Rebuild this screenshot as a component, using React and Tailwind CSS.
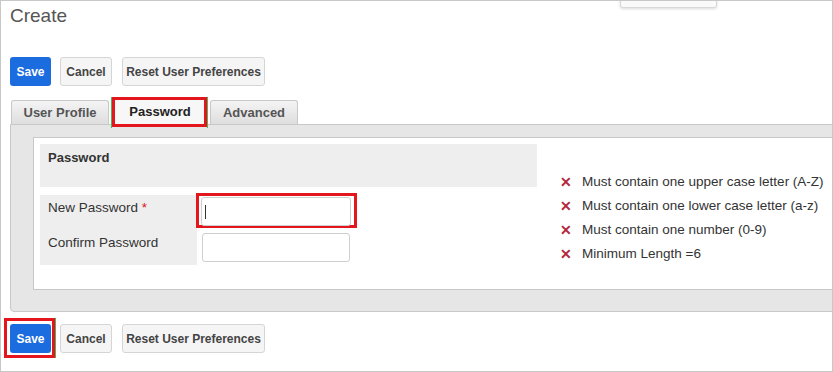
import { useState } from 'react'

const RULES = [
  'Must contain one upper case letter (A-Z)',
  'Must contain one lower case letter (a-z)',
  'Must contain one number (0-9)',
  'Minimum Length =6',
]

function ButtonRow({ highlightSave }) {
  return (
    <div className="flex items-center ml-[9px] gap-[9px]">
      <div className="relative">
        {highlightSave && <span className="absolute -left-[6px] -top-[6px] -right-[4px] -bottom-[5px] border-[3px] border-[#e3161d]" />}
        {highlightSave && <span className="absolute -right-[5px] -top-[6px] -bottom-[5px] w-[1px] bg-[#46b85a]" />}
        <button className="relative w-[41px] h-[29px] rounded-[3px] bg-[#1b6ddf] text-white text-[12px] font-bold">Save</button>
      </div>
      <button className="w-[52px] h-[29px] rounded-[3px] border border-[#d5d5d5] bg-[#f5f5f5] text-[#444] text-[12px] font-bold">Cancel</button>
      <button className="ml-[1px] w-[143px] h-[29px] rounded-[3px] border border-[#d5d5d5] bg-[#f5f5f5] text-[#444] text-[12px] font-bold">Reset User Preferences</button>
    </div>
  )
}

export default function App() {
  const [pwd, setPwd] = useState('')
  const [confirm, setConfirm] = useState('')

  return (
    <div className="relative w-[833px] h-[372px] overflow-hidden bg-white border border-[#c8c8c8] font-['Liberation_Sans',Arial,sans-serif]">
      {/* cut-off menu above */}
      <div className="absolute left-[619px] -top-[6px] w-[97px] h-[13px] rounded-[3px] border border-[#d8d8d8] bg-[#fafafa] shadow-[0_1px_3px_rgba(0,0,0,0.15)]" />

      <h1 className="ml-[9px] mt-[4px] text-[19px] leading-[21px] text-[#555]">Create</h1>

      <div className="mt-[31px]">
        <ButtonRow />
      </div>

      {/* Tabs */}
      <div className="flex items-end ml-[10px] mt-[14px] h-[24px]">
        <div className="w-[98px] h-[24px] rounded-t-[3px] border border-b-0 border-[#c8c8c8] bg-linear-to-b from-[#f4f4f4] to-[#dedede] flex items-center justify-center text-[13px] font-bold text-[#555]">User Profile</div>
        <div className="relative ml-[6px] w-[90px] h-[24px]">
          <span className="absolute -left-[4px] top-[-3px] -bottom-[4px] w-[1px] bg-[#46b85a]" />
          <span className="absolute -right-[3px] top-[-3px] -bottom-[4px] w-[1px] bg-[#46b85a]" />
          <span className="absolute -left-[3px] -top-[3px] -right-[2px] -bottom-[3px] border-[3px] border-[#e3161d]" />
          <div className="w-full h-full bg-[#f7f7f7] flex items-center justify-center text-[13px] font-bold text-[#222]">Password</div>
        </div>
        <div className="ml-[5px] w-[88px] h-[24px] rounded-t-[3px] border border-b-0 border-[#c8c8c8] bg-linear-to-b from-[#f4f4f4] to-[#dedede] flex items-center justify-center text-[13px] font-bold text-[#555]">Advanced</div>
      </div>

      {/* Tab panel */}
      <div className="ml-[9px] w-[840px] h-[188px] border border-[#c8c8c8] rounded-bl-[4px] bg-[#e6e6e6] pl-[22px] pt-[12px]">
        <div className="h-[153px] border border-[#c8c8c8] bg-white pl-[6px] pt-[6px] flex items-start">
          <div className="w-[497px]">
            <div className="h-[43px] bg-[#eeeeee] pl-[8px] pt-[4px] text-[13px] font-bold text-[#333]">Password</div>
            <div className="mt-[8px] flex">
              <div className="w-[157px] h-[70px] bg-[#eeeeee] pl-[8px] text-[13.5px] text-[#333]">
                <div className="h-[35px] pt-[3px]">New Password <span className="text-[#d11]">*</span></div>
                <div className="h-[35px] pt-[3px]">Confirm Password</div>
              </div>
              <div className="ml-[4px] pt-[2px]">
                <div className="relative w-[150px] h-[29px]">
                  <span className="absolute -left-[5px] -top-[4px] -right-[6px] -bottom-[2px] border-[3px] border-[#e3161d]" />
                  <input value={pwd} onChange={e => setPwd(e.target.value)}
                    className="relative w-full h-full rounded-[3px] border border-[#cfcfcf] bg-white px-[3px] text-[13px] outline-none" />
                  <span className="absolute left-[4px] top-[8px] w-[1px] h-[14px] bg-[#333]" />
                </div>
                <input type="password" value={confirm} onChange={e => setConfirm(e.target.value)}
                  className="mt-[7px] ml-[1px] w-[148px] h-[29px] rounded-[3px] border border-[#cfcfcf] bg-white px-[3px] text-[13px] outline-none" />
              </div>
            </div>
          </div>
          <ul className="ml-[23px] mt-[26px]">
            {RULES.map(r => (
              <li key={r} className="flex items-center h-[24px] text-[13.5px] text-[#333]">
                <span className="w-[12px] text-center text-[14px] font-bold leading-none text-[#b4283f]">✕</span>
                <span className="ml-[10px]">{r}</span>
              </li>
            ))}
          </ul>
        </div>
      </div>

      <div className="mt-[12px]">
        <ButtonRow highlightSave />
      </div>
    </div>
  )
}
